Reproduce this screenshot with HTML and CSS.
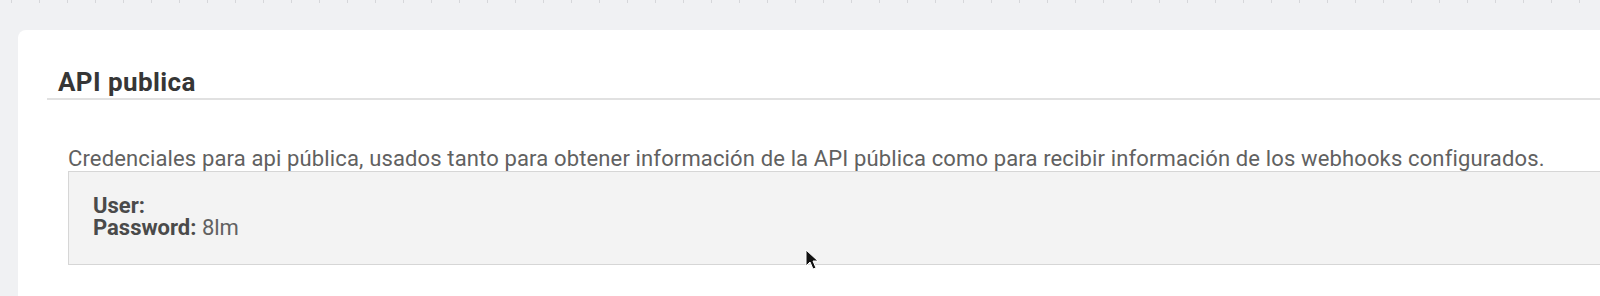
FILE: index.html
```html
<!DOCTYPE html>
<html lang="es">
<head>
    <meta charset="UTF-8">
    <title>API publica</title>
    <link rel="stylesheet" href="styles.css">
</head>
<body>
    <div class="ruler"></div>
    <div class="main">
        <div class="card">
            <h2 class="card-title">API publica</h2>
            <div class="card-body">
                <p class="help">Credenciales para api pública, usados tanto para obtener información de la API pública como para recibir información de los webhooks configurados.</p>
                <div class="credentials">
                    <div><b>User:</b></div>
                    <div><b>Password:</b> 8lm</div>
                </div>
            </div>
        </div>
    </div>
    <svg class="cursor" width="16" height="24" viewBox="0 0 16 24">
        <path d="M1 1 L1 17 L5 13 L8 20 L11 19 L8 12 L13 12 Z" fill="#111" stroke="#fff" stroke-width="1"/>
    </svg>
</body>
</html>
```

FILE: styles.css
```css
:root {
    --bg-color: #f0f1f3;
    --text-color: #616161;
}
html, body {
    margin: 0;
    height: 100%;
    overflow: hidden;
}
body {
    display: flex;
    flex-direction: column;
    background-color: var(--bg-color);
    font-family: Roboto, "Liberation Sans", sans-serif;
    color: var(--text-color);
}
.ruler {
    height: 3px;
    flex: none;
    background: repeating-linear-gradient(to right, transparent 0 11px, #d6d7da 11px 12px, transparent 12px 28px);
}
.main {
    flex: 1;
    display: flex;
    padding: 27px 0 0 18px;
}
.card {
    flex: 1;
    background: #fff;
    border-radius: 8px 0 0 0;
    margin-right: -40px;
    padding: 37px 0 0 29px;
}
.card-title {
    margin: 0;
    font-size: 26px;
    line-height: 30px;
    letter-spacing: 0.4px;
    font-weight: 700;
    color: #363636;
    padding: 0 0 1px 11px;
    border-bottom: 2px solid #e1e1e1;
}
.card-body {
    padding: 47px 0 0 21px;
}
.help {
    margin: 0;
    font-size: 22px;
    line-height: 24px;
    letter-spacing: 0.14px;
}
.credentials {
    background: #f3f3f3;
    border: 1px solid #d6d6d6;
    padding: 23px 24px 25px;
    font-size: 22px;
    line-height: 22px;
}
.credentials b {
    color: #4a4a4a;
}
.cursor {
    position: absolute;
    left: 805px;
    top: 249px;
}
```
